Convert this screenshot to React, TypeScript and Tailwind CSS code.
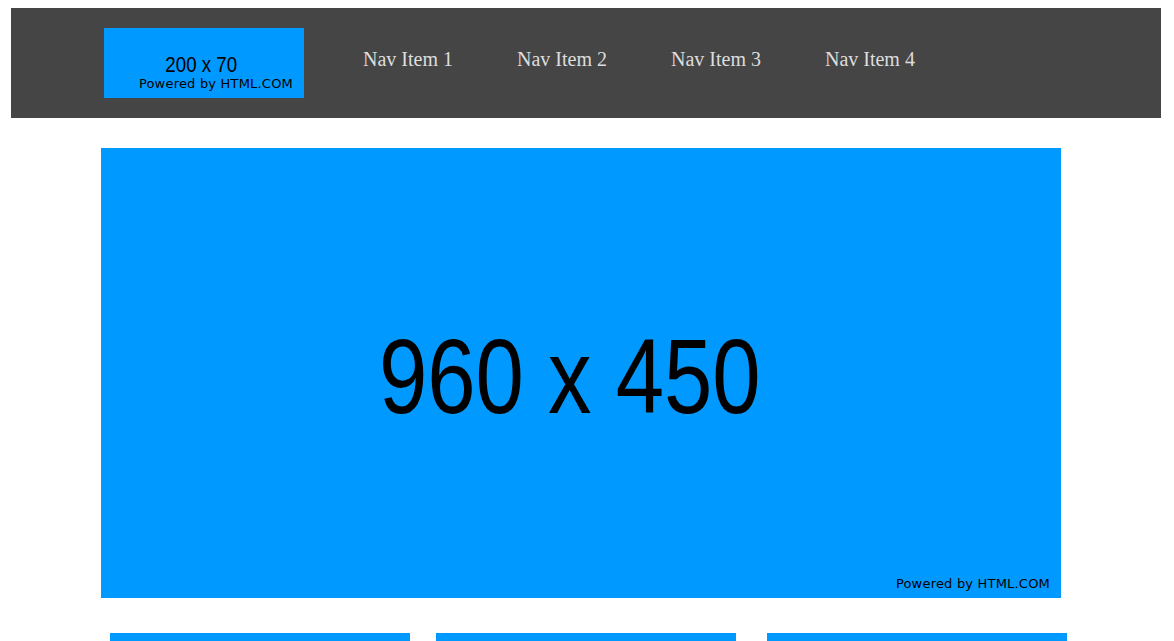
export default function App() {
  const navItems = ["Nav Item 1", "Nav Item 2", "Nav Item 3", "Nav Item 4"];
  return (
    <div className="min-h-[641px] bg-white overflow-hidden pt-[8px]">
      <header className="ml-[11px] w-[1150px] h-[110px] bg-[#454545] flex items-start pl-[93px] pt-[20px]">
        <div className="relative w-[200px] h-[70px] bg-[#0099ff] flex items-center justify-center pr-[5px] pt-[4px]">
          <span className="inline-block scale-x-[0.85] font-['Liberation_Sans',sans-serif] text-[22px] leading-none text-black">
            200 x 70
          </span>
          <span className="absolute right-[11px] bottom-[8px] font-['DejaVu_Sans',sans-serif] text-[13px] tracking-[0.2px] leading-none text-black">
            Powered by HTML.COM
          </span>
        </div>
        <nav className="flex gap-[64px] ml-[59px] mt-[21px]">
          {navItems.map((item) => (
            <a
              key={item}
              href="#"
              className="font-['Liberation_Serif',serif] text-[20px] leading-none text-[#dddddd]"
            >
              {item}
            </a>
          ))}
        </nav>
      </header>

      <main className="ml-[101px] mt-[30px] w-[960px]">
        <div className="relative h-[450px] bg-[#0099ff] flex items-center justify-center pr-[23px] pt-[6px]">
          <span className="inline-block scale-x-[0.82] font-['Liberation_Sans',sans-serif] text-[106px] leading-none text-black">
            960 x 450
          </span>
          <span className="absolute right-[11px] bottom-[8px] font-['DejaVu_Sans',sans-serif] text-[13px] tracking-[0.2px] leading-none text-black">
            Powered by HTML.COM
          </span>
        </div>
      </main>

      <section className="flex mt-[35px] ml-[110px]">
        <div className="w-[300px] h-[200px] bg-[#0099ff]" />
        <div className="w-[300px] h-[200px] bg-[#0099ff] ml-[26px]" />
        <div className="w-[300px] h-[200px] bg-[#0099ff] ml-[31px]" />
      </section>
    </div>
  );
}
